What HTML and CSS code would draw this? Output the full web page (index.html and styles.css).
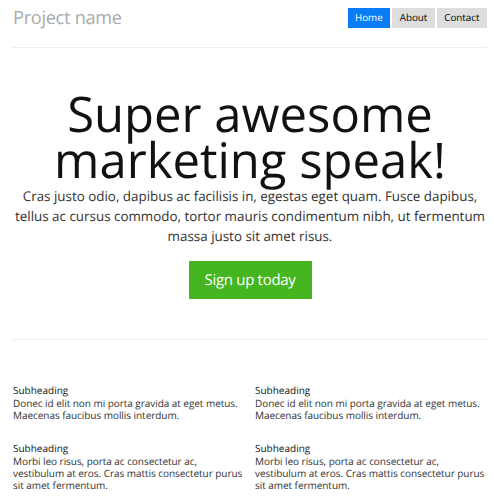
FILE: index.html
```html
<!DOCTYPE html>
<html>
<head>
<meta charset="utf-8">
<link rel="stylesheet" href="styles.css">
</head>
<body>
<div class="container">
  <header class="masthead">
    <h3 class="brand">Project name</h3>
    <nav class="nav">
      <a class="nav-item active" href="#">Home</a>
      <a class="nav-item" href="#">About</a>
      <a class="nav-item" href="#">Contact</a>
    </nav>
  </header>
  <section class="hero">
    <h1 class="hero-title">Super awesome marketing speak!</h1>
    <p class="lead">Cras justo odio, dapibus ac facilisis in, egestas eget quam. Fusce dapibus, tellus ac cursus commodo, tortor mauris condimentum nibh, ut fermentum massa justo sit amet risus.</p>
    <a class="btn-signup" href="#">Sign up today</a>
  </section>
  <section class="marketing">
    <div class="col">
      <div class="item">
        <h4 class="sub">Subheading</h4>
        <p class="text">Donec id elit non mi porta gravida at eget metus. Maecenas faucibus mollis interdum.</p>
      </div>
      <div class="item">
        <h4 class="sub">Subheading</h4>
        <p class="text">Morbi leo risus, porta ac consectetur ac, vestibulum at eros. Cras mattis consectetur purus sit amet fermentum.</p>
      </div>
    </div>
    <div class="col">
      <div class="item">
        <h4 class="sub">Subheading</h4>
        <p class="text">Donec id elit non mi porta gravida at eget metus. Maecenas faucibus mollis interdum.</p>
      </div>
      <div class="item">
        <h4 class="sub">Subheading</h4>
        <p class="text">Morbi leo risus, porta ac consectetur ac, vestibulum at eros. Cras mattis consectetur purus sit amet fermentum.</p>
      </div>
    </div>
  </section>
</div>
</body>
</html>
```
FILE: styles.css
```css
* { box-sizing: border-box; }
html, body { margin: 0; padding: 0; background: #fff; }
body {
  font-family: "Open Sans", "Noto Sans", sans-serif;
  color: #333;
  text-rendering: geometricPrecision;
}
.container {
  padding: 0 7px 0 13px;
}
.masthead {
  display: flex;
  justify-content: space-between;
  align-items: flex-start;
  padding-top: 8px;
  height: 48px;
  border-bottom: 1px solid #eee;
}
.brand {
  margin: 0;
  font-size: 18.2px;
  line-height: 20px;
  font-weight: normal;
  letter-spacing: -0.3px;
  color: #aaa;
}
.nav {
  display: flex;
  gap: 2px;
}
.nav-item {
  display: block;
  height: 20px;
  line-height: 20px;
  padding: 0 7.5px;
  font-size: 9.8px;
  color: #000;
  text-decoration: none;
  background: #ddd;
}
.nav-item.active {
  background: #0a7cf5;
  color: #fff;
}
.hero {
  text-align: center;
  padding-top: 43px;
  height: 292px;
  border-bottom: 1px solid #eee;
}
.hero-title {
  margin: 0 auto;
  font-size: 49px;
  line-height: 46px;
  font-weight: normal;
  color: #111;
  max-width: 400px;
}
.lead {
  margin: 3px 0 15px;
  font-size: 13.4px;
  line-height: 20px;
  color: #333;
}
.btn-signup {
  display: inline-block;
  width: 123px;
  height: 38px;
  line-height: 38px;
  background: #45b520;
  color: #fff;
  font-size: 15px;
  letter-spacing: -0.3px;
  text-decoration: none;
}
.marketing {
  display: grid;
  grid-template-columns: 1fr 1fr;
  column-gap: 10px;
  padding-top: 43px;
}
.item {
  margin-bottom: 20px;
}
.sub {
  margin: 0;
  font-size: 10px;
  line-height: 14px;
  font-weight: 500;
  color: #111;
}
.text {
  margin: 0;
  font-size: 10px;
  line-height: 12px;
  letter-spacing: -0.05px;
  color: #333;
}
```
